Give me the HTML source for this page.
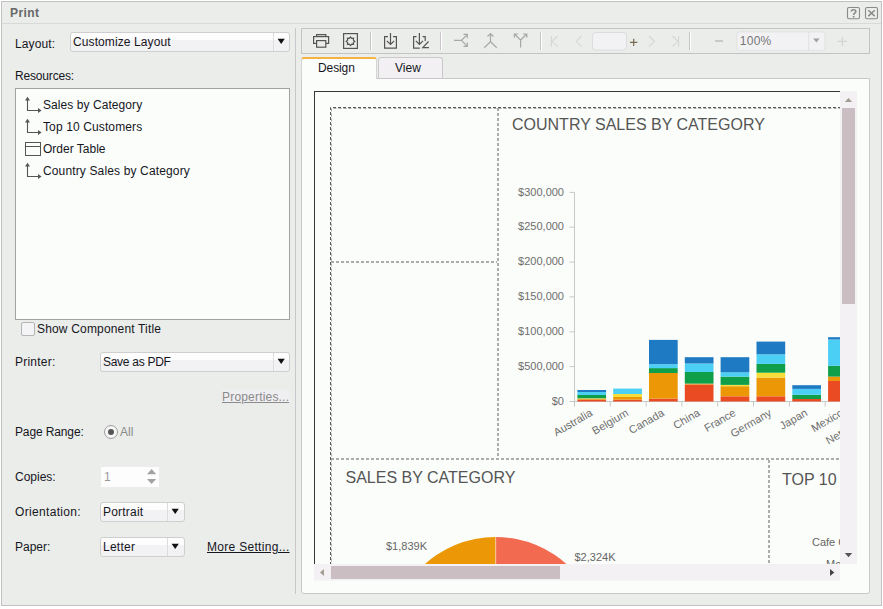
<!DOCTYPE html>
<html><head><meta charset="utf-8">
<style>
*{box-sizing:border-box;margin:0;padding:0}
html,body{width:883px;height:609px;overflow:hidden;background:#fff;font-family:"Liberation Sans",sans-serif;}
.a{position:absolute}
.t{position:absolute;white-space:nowrap;font-size:12px;line-height:12px;color:#16161e}
.dlg{left:1px;top:1px;width:881px;height:605px;border:1px solid #c2c0c3;background:#ebedea}
.dd{position:absolute;border:1px solid #cfcfcf;border-radius:3px;background:linear-gradient(#fdfdfd 0,#fdfdfd 40%,#f2f1f3 40%,#f2f1f3 100%)}
.dd .dv{position:absolute;top:0;bottom:0;width:1px;background:#dcdcdc}
.dd .ar{position:absolute;width:0;height:0;border-left:3.5px solid transparent;border-right:3.5px solid transparent;border-top:5px solid #111}
</style></head><body>
<div class="a dlg"></div>
<div class="a" style="left:2px;top:23px;width:879px;height:1px;background:#d9dad8"></div>
<div class="t" style="left:10px;top:7px;font-size:12px;line-height:12px;font-weight:bold;color:#676767;letter-spacing:0.4px">Print</div>
<!-- help / close -->
<svg class="a" style="left:846px;top:6px" width="34" height="15" viewBox="0 0 34 15">
 <rect x="1.5" y="1.5" width="12" height="11.2" rx="1.5" fill="none" stroke="#8a8a8a" stroke-width="1.1"/>
 <path d="M5.4 5.6 C5.4 3.2 9.8 3.2 9.8 5.4 C9.8 7.2 7.6 7.2 7.6 9" fill="none" stroke="#8a8a8a" stroke-width="1.6"/>
 <rect x="6.8" y="10" width="1.7" height="1.6" fill="#8a8a8a"/>
 <rect x="19.5" y="1.5" width="12" height="11.2" rx="1.5" fill="none" stroke="#8a8a8a" stroke-width="1.1"/>
 <path d="M22.3 4.3 L28.7 10.1 M28.7 4.3 L22.3 10.1" stroke="#8a8a8a" stroke-width="1.5"/>
</svg>

<!-- LEFT PANEL -->
<div class="t" style="left:15px;top:38px;letter-spacing:0.10px">Layout:</div>
<div class="dd" style="left:70px;top:32px;width:220px;height:20px">
 <div class="t" style="left:2px;top:3px;letter-spacing:0.10px">Customize Layout</div>
 <div class="dv" style="left:202px"></div>
 <svg class="a" style="left:206px;top:5px" width="10" height="8" viewBox="0 0 10 8"><path d="M0.6 0.8 H7.8 L4.2 6 Z" fill="#111"/></svg>
</div>
<div class="t" style="left:15px;top:70px;letter-spacing:-0.17px">Resources:</div>
<div class="a" style="left:15px;top:88px;width:275px;height:232px;border:1px solid #a3a1a4;background:#fbfdfa"></div>
<svg class="a" style="left:24px;top:96px" width="20" height="86" viewBox="0 0 20 86">
 <path d="M3.5 2.5 V14.5 H15.5" fill="none" stroke="#555" stroke-width="1.1"/><path d="M1 4.6 L3.5 0.8 L6 4.6 Z M14 12 L17.6 14.5 L14 17 Z" fill="#555"/>
 <path d="M3.5 24.5 V36.5 H15.5" fill="none" stroke="#555" stroke-width="1.1"/><path d="M1 26.6 L3.5 22.8 L6 26.6 Z M14 34 L17.6 36.5 L14 39 Z" fill="#555"/>
 <rect x="1.5" y="46.5" width="15" height="13" fill="none" stroke="#555" stroke-width="1"/><path d="M1.5 50.5 H16.5" stroke="#555" stroke-width="1"/>
 <path d="M3.5 68.5 V80.5 H15.5" fill="none" stroke="#555" stroke-width="1.1"/><path d="M1 70.6 L3.5 66.8 L6 70.6 Z M14 78 L17.6 80.5 L14 83 Z" fill="#555"/>
</svg>
<div class="t" style="left:43px;top:99px;letter-spacing:0.07px">Sales by Category</div>
<div class="t" style="left:43px;top:121px;letter-spacing:0.12px">Top 10 Customers</div>
<div class="t" style="left:43px;top:143px">Order Table</div>
<div class="t" style="left:43px;top:165px;letter-spacing:0.14px">Country Sales by Category</div>

<div class="a" style="left:21px;top:322px;width:14px;height:14px;border:1px solid #b5b5b5;border-radius:2px;background:#f4f3f6"></div>
<div class="t" style="left:37px;top:323px;letter-spacing:0.17px">Show Component Title</div>

<div class="t" style="left:15px;top:356px;letter-spacing:0.23px">Printer:</div>
<div class="dd" style="left:100px;top:352px;width:190px;height:20px">
 <div class="t" style="left:2px;top:3px;letter-spacing:-0.28px">Save as PDF</div>
 <div class="dv" style="left:172px"></div>
 <svg class="a" style="left:176px;top:5px" width="10" height="8" viewBox="0 0 10 8"><path d="M0.6 0.8 H7.8 L4.2 6 Z" fill="#111"/></svg>
</div>
<div class="a" style="left:222px;top:390px;width:68px;height:13px;background:#efeef1"></div>
<div class="t" style="left:222px;top:391px;color:#8a8a8a;text-decoration:underline;letter-spacing:0.19px">Properties...</div>

<div class="t" style="left:15px;top:426px;letter-spacing:-0.13px">Page Range:</div>
<div class="a" style="left:104px;top:425px;width:14px;height:14px;border:1px solid #9c9c9c;border-radius:50%;background:#f8f8f8"></div>
<div class="a" style="left:108px;top:429px;width:6px;height:6px;border-radius:50%;background:#555"></div>
<div class="t" style="left:120px;top:426px;color:#8a8a8a">All</div>

<div class="t" style="left:15px;top:471px">Copies:</div>
<div class="a" style="left:100px;top:466px;width:60px;height:22px;background:#fdfdfd;border:1px solid #ececec"></div>
<div class="t" style="left:104px;top:471px;color:#999">1</div>
<svg class="a" style="left:146px;top:467px" width="12" height="20" viewBox="0 0 12 20">
 <path d="M1 7.2 L5.6 2.1 L10.2 7.2 Z" fill="#a3a3a3"/><path d="M1 11.9 L5.6 17 L10.2 11.9 Z" fill="#a3a3a3"/>
</svg>

<div class="t" style="left:15px;top:506px;letter-spacing:0.33px">Orientation:</div>
<div class="dd" style="left:100px;top:502px;width:85px;height:20px">
 <div class="t" style="left:2px;top:3px;letter-spacing:0.20px">Portrait</div>
 <div class="dv" style="left:66px"></div>
 <svg class="a" style="left:70px;top:5px" width="10" height="8" viewBox="0 0 10 8"><path d="M0.6 0.8 H7.8 L4.2 6 Z" fill="#111"/></svg>
</div>
<div class="t" style="left:15px;top:541px">Paper:</div>
<div class="dd" style="left:100px;top:537px;width:85px;height:20px">
 <div class="t" style="left:2px;top:3px;letter-spacing:0.25px">Letter</div>
 <div class="dv" style="left:66px"></div>
 <svg class="a" style="left:70px;top:5px" width="10" height="8" viewBox="0 0 10 8"><path d="M0.6 0.8 H7.8 L4.2 6 Z" fill="#111"/></svg>
</div>
<div class="t" style="left:207px;top:541px;text-decoration:underline;letter-spacing:0.30px">More Setting...</div>

<!-- separator -->
<div class="a" style="left:295px;top:28px;width:1px;height:566px;background:#cac7cb"></div>

<!-- RIGHT PANEL -->
<div class="a" style="left:301px;top:28px;width:569px;height:26px;border:1px solid #c4c3c4"></div>


<!-- toolbar icons -->
<svg class="a" style="left:302px;top:29px" width="567" height="24" viewBox="302 29 567 24">
 <g fill="none" stroke="#555" stroke-width="1.2">
  <path d="M316.6 37 V34.6 H325.8 V37"/>
  <rect x="313.6" y="36.6" width="15" height="6.8"/>
  <rect x="316.6" y="40.6" width="9.2" height="6.6" fill="#ebedea"/>
  <rect x="343.6" y="33.6" width="13.8" height="14.8"/>
 </g>
 <polygon points="350.50,37.00 349.31,38.44 347.46,38.26 347.64,40.11 346.20,41.30 347.64,42.49 347.46,44.34 349.31,44.16 350.50,45.60 351.69,44.16 353.54,44.34 353.36,42.49 354.80,41.30 353.36,40.11 353.54,38.26 351.69,38.44" fill="none" stroke="#555" stroke-width="1.2" stroke-linejoin="miter"/>
 <path d="M370.5 32 V50" stroke="#c6c4c6" stroke-width="1"/><path d="M371.5 32 V50" stroke="#fff" stroke-width="1"/>
 <g fill="none" stroke="#555" stroke-width="1.2">
  <path d="M388 36.6 H384.6 V48.2 H396.4 V36.6 H393"/>
  <path d="M390.5 33 V44.5 M386.8 40.8 L390.5 44.5 L394.2 40.8"/>
  <path d="M416.5 36.6 H413.6 V48.2 H419.8 M422.6 36.6 H425.2 V41"/>
  <path d="M419.4 33 V44.5 M415.8 40.8 L419.4 44.5 L423 40.8"/>
  <path d="M428.5 41.5 L422.8 47.6 H429"/>
 </g>
 <path d="M440.5 32 V50" stroke="#c6c4c6" stroke-width="1"/><path d="M441.5 32 V50" stroke="#fff" stroke-width="1"/>
 <g fill="none" stroke="#a8a8a8" stroke-width="1.2">
  <path d="M454 40.4 H461.5 L467.3 34.4 M461.5 40.4 L467.3 46.4 M463.5 34.4 H467.3 V38.2 M463.5 46.4 H467.3 V42.6"/>
  <path d="M490.5 33.5 V41.8 L484.2 47.8 M490.5 41.8 L496.8 47.8 M487.5 36.5 L490.5 33.5 L493.5 36.5"/>
  <path d="M520.6 47.6 V40 L514.4 34 M520.6 40 L526.8 34 M514.4 37.8 V34 H518.2 M526.8 37.8 V34 H523"/>
 </g>
 <path d="M540.5 32 V50" stroke="#c6c4c6" stroke-width="1"/><path d="M541.5 32 V50" stroke="#fff" stroke-width="1"/>
 <g fill="none" stroke="#d6d6d6" stroke-width="1.1">
  <path d="M551.4 36 V46.7 M557.5 36 L551.9 41.3 L557.5 46.7"/>
  <path d="M581.5 36 L576.1 41.3 L581.5 46.7"/>
  <path d="M648.9 36 L654.5 41.3 L648.9 46.7"/>
  <path d="M678.6 36 V46.7 M672.4 36 L678 41.3 L672.4 46.7"/>
 </g>
 <rect x="592.5" y="32.5" width="34" height="17.6" rx="3" fill="#f2f1f3" stroke="#dcdcdc"/>
 <path d="M630 42.4 H637.4 M633.7 38.8 V46" stroke="#7a6a50" stroke-width="1.2"/>
 <path d="M689.5 32 V50" stroke="#c6c4c6" stroke-width="1"/><path d="M690.5 32 V50" stroke="#fff" stroke-width="1"/>
 <path d="M715 41 H723" stroke="#c9c9c9" stroke-width="2"/>
 <rect x="736.8" y="31.8" width="88.2" height="18.6" rx="3" fill="#f2f1f3" stroke="#e2e2e2"/>
 <path d="M808.8 32 V50.2" stroke="#e0e0e0" stroke-width="1"/>
 <path d="M813.2 38.4 H819.6 L816.4 42.5 Z" fill="#a0a0a0"/>
 <text x="739.8" y="45.3" font-family="Liberation Sans" font-size="12" fill="#777" letter-spacing="0.25">100%</text>
 <path d="M837.8 41.3 H847 M842.4 36.7 V45.9" stroke="#d4d4d4" stroke-width="1.2"/>
</svg>

<!-- tabs -->
<div class="a" style="left:378px;top:57px;width:65px;height:22px;border:1px solid #c9c9c9;border-bottom:none;border-radius:3px 3px 0 0;background:#f2f0f3"></div>
<div class="a" style="left:301px;top:78px;width:569px;height:516px;border:1px solid #cac7cb;border-radius:0 0 3px 3px;background:#fbfdfa"></div>
<div class="a" style="left:301px;top:57px;width:76px;height:22px;border:1px solid #d4d4d4;border-bottom:none;border-top:2px solid #f5b342;border-radius:3px 3px 0 0;background:#fbfdfa"></div>
<div class="t" style="left:318px;top:62px;letter-spacing:-0.10px">Design</div>
<div class="t" style="left:395px;top:62px">View</div>


<!-- PREVIEW -->
<svg class="a" style="left:0;top:0" width="883" height="609" viewBox="0 0 883 609">
 <defs><clipPath id="vp"><rect x="314" y="91" width="526" height="473"/></clipPath></defs>
 <g clip-path="url(#vp)">
  <rect x="314.5" y="91.5" width="700" height="700" fill="none" stroke="#38353b" stroke-width="1"/>
  <g fill="none" stroke="#acacac" stroke-width="2" stroke-dasharray="3 2">
   <path d="M331.5 600 V108.5 H900" stroke-width="1" stroke-dashoffset="1.5"/>
   <path d="M498 108 V459"/>
   <path d="M331 262 H497"/>
   <path d="M331 459 H900"/>
   <path d="M769 460 V700"/>
  </g>
  <path d="M330.5 600 V107.5 H900" fill="none" stroke="#5a5a5a" stroke-width="1" stroke-dasharray="3 2"/>
  <text x="512" y="130" font-family="Liberation Sans" font-size="16" fill="#555">COUNTRY SALES BY CATEGORY</text>
  <g stroke="#c8c8c8" stroke-width="1" fill="none">
  <path d="M574.5 192.4 V406.5 M574.5 401.5 H900"/>
  <path d="M569.5 401.5 H574.5"/><path d="M569.5 366.6 H574.5"/><path d="M569.5 331.8 H574.5"/><path d="M569.5 296.9 H574.5"/><path d="M569.5 262.1 H574.5"/><path d="M569.5 227.2 H574.5"/><path d="M569.5 192.4 H574.5"/>
  <path d="M574.5 401.5 V406.5"/><path d="M610.3 401.5 V406.5"/><path d="M646.1 401.5 V406.5"/><path d="M681.9 401.5 V406.5"/><path d="M717.7 401.5 V406.5"/><path d="M753.5 401.5 V406.5"/><path d="M789.4 401.5 V406.5"/><path d="M825.2 401.5 V406.5"/><path d="M861.0 401.5 V406.5"/><path d="M896.8 401.5 V406.5"/>
  </g>
  <g font-family="Liberation Sans" font-size="11" fill="#6e6e6e">
  <text x="564" y="404.6" text-anchor="end">$0</text><text x="564" y="369.8" text-anchor="end">$500,000</text><text x="564" y="334.9" text-anchor="end">$100,000</text><text x="564" y="300.1" text-anchor="end">$150,000</text><text x="564" y="265.2" text-anchor="end">$200,000</text><text x="564" y="230.3" text-anchor="end">$250,000</text><text x="564" y="195.5" text-anchor="end">$300,000</text><text transform="translate(593.4 415) rotate(-30)" text-anchor="end">Australia</text><text transform="translate(629.2 415) rotate(-30)" text-anchor="end">Belgium</text><text transform="translate(665.0 415) rotate(-30)" text-anchor="end">Canada</text><text transform="translate(700.8 415) rotate(-30)" text-anchor="end">China</text><text transform="translate(736.6 415) rotate(-30)" text-anchor="end">France</text><text transform="translate(772.4 415) rotate(-30)" text-anchor="end">Germany</text><text transform="translate(808.3 415) rotate(-30)" text-anchor="end">Japan</text><text transform="translate(844.1 415) rotate(-30)" text-anchor="end">Mexico</text><text transform="translate(879.9 415) rotate(-30)" text-anchor="end">Netherlands</text>
  </g>
  <rect x="577.4" y="399.7" width="28.7" height="1.8" fill="#ea4b23"/>
<rect x="577.4" y="398.8" width="28.7" height="0.9" fill="#ec9806"/>
<rect x="577.4" y="398.3" width="28.7" height="0.5" fill="#f5de3a"/>
<rect x="577.4" y="395.0" width="28.7" height="3.3" fill="#0f9e4a"/>
<rect x="577.4" y="392.0" width="28.7" height="3.0" fill="#4bcff5"/>
<rect x="577.4" y="390.0" width="28.7" height="2.0" fill="#1f7ac4"/>
<rect x="613.2" y="399.7" width="28.7" height="1.8" fill="#ea4b23"/>
<rect x="613.2" y="397.0" width="28.7" height="2.7" fill="#ec9806"/>
<rect x="613.2" y="394.0" width="28.7" height="3.0" fill="#f5de3a"/>
<rect x="613.2" y="388.6" width="28.7" height="5.4" fill="#4bcff5"/>
<rect x="649.0" y="398.6" width="28.7" height="2.9" fill="#ea4b23"/>
<rect x="649.0" y="373.0" width="28.7" height="25.6" fill="#ec9806"/>
<rect x="649.0" y="368.1" width="28.7" height="4.9" fill="#0f9e4a"/>
<rect x="649.0" y="364.2" width="28.7" height="3.9" fill="#4bcff5"/>
<rect x="649.0" y="339.9" width="28.7" height="24.3" fill="#1f7ac4"/>
<rect x="684.8" y="384.5" width="28.7" height="17.0" fill="#ea4b23"/>
<rect x="684.8" y="383.6" width="28.7" height="0.9" fill="#ec9806"/>
<rect x="684.8" y="372.0" width="28.7" height="11.6" fill="#0f9e4a"/>
<rect x="684.8" y="363.5" width="28.7" height="8.5" fill="#4bcff5"/>
<rect x="684.8" y="357.2" width="28.7" height="6.3" fill="#1f7ac4"/>
<rect x="720.6" y="396.3" width="28.7" height="5.2" fill="#ea4b23"/>
<rect x="720.6" y="386.2" width="28.7" height="10.1" fill="#ec9806"/>
<rect x="720.6" y="384.9" width="28.7" height="1.3" fill="#f5de3a"/>
<rect x="720.6" y="376.6" width="28.7" height="8.3" fill="#0f9e4a"/>
<rect x="720.6" y="372.3" width="28.7" height="4.3" fill="#4bcff5"/>
<rect x="720.6" y="357.2" width="28.7" height="15.1" fill="#1f7ac4"/>
<rect x="756.5" y="396.3" width="28.7" height="5.2" fill="#ea4b23"/>
<rect x="756.5" y="377.6" width="28.7" height="18.7" fill="#ec9806"/>
<rect x="756.5" y="372.7" width="28.7" height="4.9" fill="#f5de3a"/>
<rect x="756.5" y="363.9" width="28.7" height="8.8" fill="#0f9e4a"/>
<rect x="756.5" y="354.3" width="28.7" height="9.6" fill="#4bcff5"/>
<rect x="756.5" y="341.6" width="28.7" height="12.7" fill="#1f7ac4"/>
<rect x="792.3" y="399.0" width="28.7" height="2.5" fill="#ea4b23"/>
<rect x="792.3" y="394.8" width="28.7" height="4.2" fill="#0f9e4a"/>
<rect x="792.3" y="388.9" width="28.7" height="5.9" fill="#4bcff5"/>
<rect x="792.3" y="385.2" width="28.7" height="3.7" fill="#1f7ac4"/>
<rect x="828.1" y="381.0" width="28.7" height="20.5" fill="#ea4b23"/>
<rect x="828.1" y="376.6" width="28.7" height="4.4" fill="#ec9806"/>
<rect x="828.1" y="365.7" width="28.7" height="10.9" fill="#0f9e4a"/>
<rect x="828.1" y="339.5" width="28.7" height="26.2" fill="#4bcff5"/>
<rect x="828.1" y="337.2" width="28.7" height="2.3" fill="#1f7ac4"/>
  <text x="345.5" y="482.5" font-family="Liberation Sans" font-size="16" fill="#555">SALES BY CATEGORY</text>
  <text x="782" y="484.5" font-family="Liberation Sans" font-size="16" fill="#555">TOP 10</text>
  <path d="M495.7 643 V537 A106 106 0 0 0 389.7 643 Z" fill="#ec9806"/>
  <path d="M495.7 643 V537 A106 106 0 0 1 601.7 643 Z" fill="#f26a4f"/>
  <path d="M495.7 537 V643" stroke="#f6d6b0" stroke-width="0.8"/>
  <g font-family="Liberation Sans" font-size="11" fill="#666">
   <text x="386" y="550">$1,839K</text>
   <text x="574.5" y="560.5">$2,324K</text>
   <text x="812" y="545.5">Cafe Centro</text>
   <text x="826" y="568">Mo</text>
  </g>
 </g>
 <rect x="840" y="91" width="17" height="473" fill="#f3f1f4"/>
 <rect x="842" y="108" width="13" height="196" fill="#cbbec3"/>
 <path d="M844.8 102 L848.5 98 L852.2 102 Z" fill="#a39d93"/>
 <path d="M844.8 553 L848.5 557.2 L852.2 553 Z" fill="#555"/>
 <rect x="314" y="564" width="526" height="16.5" fill="#f3f1f4"/>
 <rect x="331" y="566" width="229" height="13" fill="#cbbec3"/>
 <path d="M324 569 L320 572.5 L324 576 Z" fill="#a39d93"/>
 <path d="M830 569 L834.3 572.5 L830 576 Z" fill="#444"/>
</svg>

</body></html>
